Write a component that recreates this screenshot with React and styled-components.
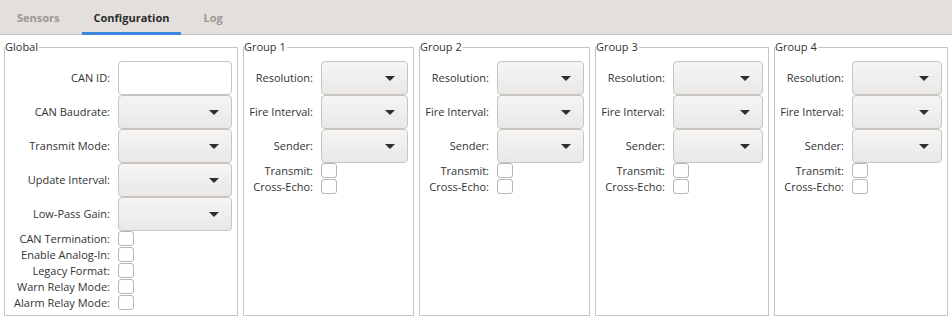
import styled, { createGlobalStyle } from "styled-components";

const GlobalStyle = createGlobalStyle`
  html, body {
    margin: 0;
    padding: 0;
    background: #ffffff;
  }
  body {
    font-family: "Open Sans", "Noto Sans", sans-serif;
    font-size: 11px;
    color: #333333;
  }
`;

const Page = styled.div`
  width: 952px;
  height: 320px;
  overflow: hidden;
`;

const TabBar = styled.div`
  display: flex;
  gap: 10px;
  height: 34px;
  padding-left: 5px;
  background: #e2dfdc;
  border-bottom: 1px solid #c9c5c0;
`;

const Tab = styled.div`
  display: flex;
  align-items: center;
  box-sizing: border-box;
  height: 35px;
  padding: 3px 12px 0;
  margin-bottom: -1px;
  font-weight: 700;
  font-size: 11px;
  color: ${(p) => (p.$active ? "#2b2b2b" : "#9a9896")};
  border-bottom: 3px solid ${(p) => (p.$active ? "#3a87e0" : "transparent")};
`;

const Groups = styled.div`
  display: grid;
  grid-template-columns: 234px 171px 171px 174px 174px;
  column-gap: 5px;
  padding: 4px 4px 0;
`;

const Fieldset = styled.fieldset`
  margin: 0;
  padding: 6px 5px 0 0;
  height: 277px;
  box-sizing: border-box;
  border: 1px solid #c8c4bf;
  min-width: 0;
`;

const Legend = styled.legend`
  padding: 0 1px 0 0;
  margin: 0;
  line-height: 16px;
  color: #333333;
`;

const Form = styled.div`
  display: grid;
  grid-template-columns: ${(p) => p.$labelWidth}px 1fr;
  column-gap: 8px;
`;

const Label = styled.div`
  justify-self: end;
  align-self: center;
  white-space: nowrap;
  line-height: 16px;
`;

const TextField = styled.div`
  box-sizing: border-box;
  height: 34px;
  border: 1px solid #c8c4bf;
  border-radius: 4px;
  background: #ffffff;
`;

const Combo = styled.div`
  box-sizing: border-box;
  height: 34px;
  display: flex;
  align-items: center;
  justify-content: flex-end;
  padding-right: 12px;
  border: 1px solid #c8c4bf;
  border-radius: 4px;
  background: linear-gradient(#f6f5f4, #eae8e6);
`;

const Check = styled.div`
  box-sizing: border-box;
  width: 16px;
  height: 15px;
  margin: 0 0 1px;
  border: 1px solid #b9b5b0;
  border-radius: 3px;
  background: #ffffff;
`;

const Arrow = () => (
  <svg width="10" height="5" viewBox="0 0 10 5">
    <polygon points="0,0 10,0 5,5" fill="#2e2e2e" />
  </svg>
);

const Field = ({ label, type }) => (
  <>
    <Label>{label}</Label>
    {type === "text" && <TextField />}
    {type === "combo" && (
      <Combo>
        <Arrow />
      </Combo>
    )}
    {type === "check" && <Check />}
  </>
);

const globalFields = [
  ["CAN ID:", "text"],
  ["CAN Baudrate:", "combo"],
  ["Transmit Mode:", "combo"],
  ["Update Interval:", "combo"],
  ["Low-Pass Gain:", "combo"],
  ["CAN Termination:", "check"],
  ["Enable Analog-In:", "check"],
  ["Legacy Format:", "check"],
  ["Warn Relay Mode:", "check"],
  ["Alarm Relay Mode:", "check"],
];

const groupFields = [
  ["Resolution:", "combo"],
  ["Fire Interval:", "combo"],
  ["Sender:", "combo"],
  ["Transmit:", "check"],
  ["Cross-Echo:", "check"],
];

const App = () => {
  return (
    <Page>
      <GlobalStyle />
      <TabBar>
        <Tab>Sensors</Tab>
        <Tab $active>Configuration</Tab>
        <Tab>Log</Tab>
      </TabBar>
      <Groups>
        <Fieldset>
          <Legend>Global</Legend>
          <Form $labelWidth={105}>
            {globalFields.map(([label, type]) => (
              <Field key={label} label={label} type={type} />
            ))}
          </Form>
        </Fieldset>
        {[1, 2, 3, 4].map((n) => (
          <Fieldset key={n}>
            <Legend>{`Group ${n}`}</Legend>
            <Form $labelWidth={69}>
              {groupFields.map(([label, type]) => (
                <Field key={label} label={label} type={type} />
              ))}
            </Form>
          </Fieldset>
        ))}
      </Groups>
    </Page>
  );
};

export default App;
